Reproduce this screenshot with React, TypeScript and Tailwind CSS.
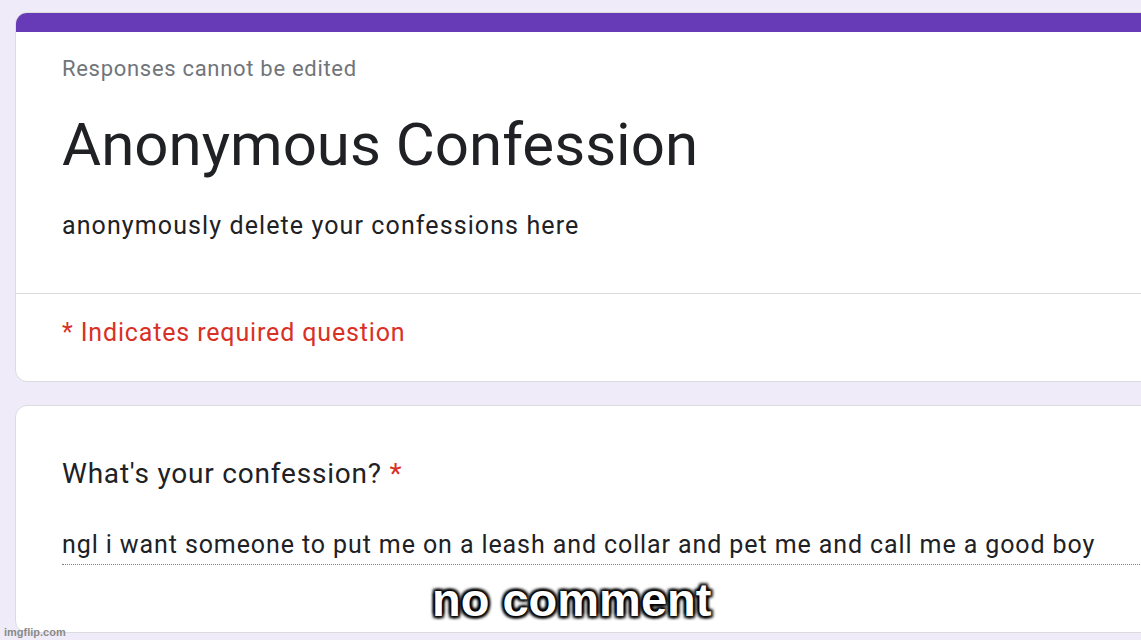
export default function App() {
  return (
    <div
      className="relative w-[1141px] h-[640px] overflow-hidden bg-[#efebf8]"
      style={{ fontFamily: "Roboto, 'Liberation Sans', sans-serif" }}
    >
      <div className="pt-[12px] pl-[15px]">
        <div className="w-[1160px] h-[370px] rounded-[12px] bg-white border border-[#dadce0] overflow-hidden flex flex-col">
          <div className="h-[19px] bg-[#673ab7] shrink-0" />
          <div className="pl-[46px] pt-[24px] h-[261px]">
            <div className="text-[22px] tracking-[0.7px] text-[#70757a] leading-[26px]">Responses cannot be edited</div>
            <div className="mt-[27px] text-[60px] text-[#202124] leading-[72px]">Anonymous Confession</div>
            <div className="mt-[30px] text-[25px] tracking-[1.1px] text-[#202124] leading-[30px]">anonymously delete your confessions here</div>
          </div>
          <div className="h-px bg-[#dadce0]" />
          <div className="pl-[46px] pt-[24px]">
            <div className="text-[25px] tracking-[0.85px] text-[#d93025] leading-[30px]">* Indicates required question</div>
          </div>
        </div>
        <div className="mt-[23px] w-[1160px] h-[228px] rounded-[12px] bg-white border border-[#dadce0] pl-[46px] pt-[51px]">
          <div className="text-[28px] tracking-[0.8px] text-[#202124] leading-[34px]">
            What's your confession? <span className="text-[#d93025]">*</span>
          </div>
          <div className="mt-[39px] text-[25px] tracking-[0.9px] text-[#202124] leading-[30px] pb-[4px] border-b border-dotted border-[#80868b]">
            ngl i want someone to put me on a leash and collar and pet me and call me a good boy
          </div>
        </div>
      </div>
      <div
        className="absolute left-[432px] top-[574px] text-[47px] font-bold text-white leading-[52px]"
        style={{
          fontFamily: "'Liberation Sans', Arial, sans-serif",
          textShadow:
            "2px 2px 3px #000, -2px -2px 3px #000, 2px -2px 3px #000, -2px 2px 3px #000, 0 0 4px #000",
        }}
      >
        no comment
      </div>
      <div
        className="absolute left-[4px] top-[624px] text-[11px] text-[#8a8a8a] font-bold"
        style={{ fontFamily: "'Liberation Sans', Arial, sans-serif" }}
      >
        imgflip.com
      </div>
    </div>
  );
}
